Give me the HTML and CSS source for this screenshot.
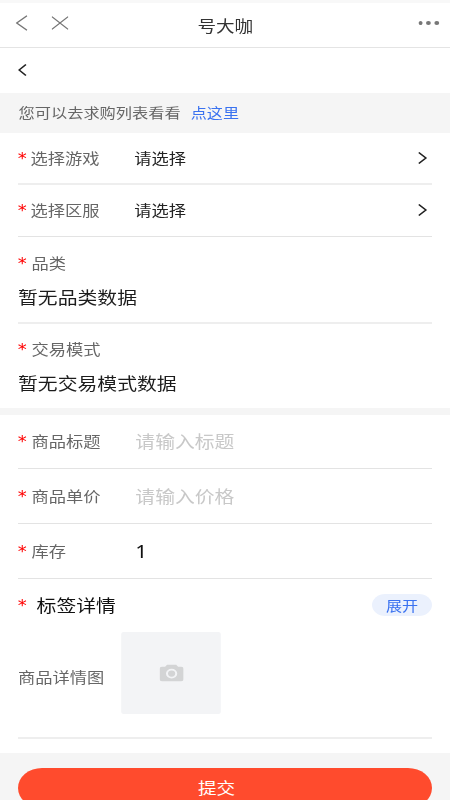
FILE: index.html
```html
<!DOCTYPE html>
<html lang="zh-CN">
<head>
<meta charset="utf-8">
<meta name="viewport" content="width=device-width, initial-scale=1">
<title>号大咖</title>
<link rel="stylesheet" href="styles.css">
</head>
<body>
<div class="screen">
  <div class="status"></div>
  <header class="nav">
    <div class="nav-left">
      <svg class="nav-back" width="10" height="16" viewBox="0 0 10 16"><path d="M9.5 0.7L0.9 8L9.5 15.3"/></svg>
      <svg class="nav-close" width="14" height="14" viewBox="0 0 14 14"><path d="M0.2 0.6L13.8 13.4M13.8 0.6L0.2 13.4"/></svg>
    </div>
    <h1 class="nav-title">号大咖</h1>
    <div class="dots"><i></i><i></i><i></i></div>
  </header>
  <div class="back-row">
    <svg width="8" height="12" viewBox="0 0 8 12"><path d="M6.6 0.5L0.9 6L6.6 11.5"/></svg>
  </div>
  <div class="notice"><span>您可以去求购列表看看</span><a>点这里</a></div>

  <section class="group">
    <div class="row select first">
      <b class="star">*</b><span class="label">选择游戏</span><span class="picked">请选择</span>
      <svg class="arrow" width="8" height="12" viewBox="0 0 8 12"><path d="M1 0.5L6.9 6L1 11.5"/></svg>
    </div>
    <div class="row select second">
      <b class="star">*</b><span class="label">选择区服</span><span class="picked">请选择</span>
      <svg class="arrow" width="8" height="12" viewBox="0 0 8 12"><path d="M1 0.5L6.9 6L1 11.5"/></svg>
    </div>
    <div class="block lined">
      <div class="block-head"><b class="star">*</b><span class="label">品类</span></div>
      <div class="value">暂无品类数据</div>
    </div>
    <div class="block">
      <div class="block-head"><b class="star">*</b><span class="label">交易模式</span></div>
      <div class="value">暂无交易模式数据</div>
    </div>
  </section>
  <div class="divider"></div>
  <section class="group">
    <div class="row field title-field"><b class="star">*</b><span class="label">商品标题</span><span class="hint">请输入标题</span></div>
    <div class="row field"><b class="star">*</b><span class="label">商品单价</span><span class="hint">请输入价格</span></div>
    <div class="row field"><b class="star">*</b><span class="label">库存</span><span class="amount">1</span></div>
    <div class="tags"><b class="star">*</b><span class="tags-title">标签详情</span><span class="pill">展开</span></div>
    <div class="upload">
      <span class="upload-label">商品详情图</span>
      <div class="photo">
        <svg width="20" height="18" viewBox="0 0 20 18"><path fill="#d3d4d5" fill-rule="evenodd" d="M6.2 0.8H13.8L15.4 2.8H18Q20 2.8 20 4.8V15.2Q20 17.2 18 17.2H2Q0 17.2 0 15.2V4.8Q0 2.8 2 2.8H4.6ZM10 4.7A4.7 4.9 0 1 0 10 14.5A4.7 4.9 0 1 0 10 4.7ZM10 6.5A3 3.1 0 1 1 10 12.7A3 3.1 0 1 1 10 6.5Z"/></svg>
      </div>
    </div>
  </section>
  <footer class="footer"><div class="submit">提交</div></footer>
</div>
</body>
</html>
```

FILE: styles.css
```css
* { box-sizing: border-box; }
html, body { margin: 0; height: 800px; overflow: hidden; background: #fff; }

.screen {
  width: 375px;
  height: 800px;
  overflow: hidden;
  display: flex;
  flex-direction: column;
  transform: scaleX(1.2);
  transform-origin: 0 0;
  font-family: "Noto Sans CJK SC", sans-serif;
  font-size: 14.4px;
  line-height: 20px;
  color: #666;
  white-space: nowrap;
}
.screen > * { flex-shrink: 0; }
svg { display: block; fill: none; stroke-width: 1.2; }

.status { height: 3px; background: #f8f8f8; }
.nav {
  height: 45px;
  border-bottom: 1px solid #e4e4e4;
  display: grid;
  grid-template-columns: 1fr auto 1fr;
  align-items: center;
  padding: 0 9px 0 12.5px;
}
.nav-left { display: flex; align-items: center; gap: 20px; padding-bottom: 4px; }
.nav-left svg { stroke: #777; }
.nav-title { margin: 0; font-size: 15.5px; font-weight: 400; color: #333; justify-self: center; position: relative; left: -1.5px; }
.dots { display: flex; gap: 3px; justify-self: end; padding-bottom: 4px; }
.dots i { width: 3.8px; height: 4px; border-radius: 50%; background: #777; }

.back-row { height: 45px; padding: 0 15px; display: flex; align-items: center; }
.back-row svg { stroke: #222; stroke-width: 1.4; margin-bottom: 2px; }
.notice {
  height: 40px;
  padding: 0 15.5px 2px;
  background: #f5f5f5;
  display: flex;
  align-items: center;
  gap: 8.5px;
  font-size: 13.5px;
}
.notice a { color: #3a72f0; font-size: 13.4px; }

.group { padding: 0 15px; }
.star { width: 11.3px; height: 20px; color: #f00; font: 400 15px/23px "DejaVu Sans", sans-serif; text-indent: -0.3px; }
.row { display: flex; align-items: center; padding-bottom: 1px; }
.row .label { width: 86.5px; }
.select .star { width: 10.4px; }
.first { height: 52px; border-bottom: 2px solid #eee; padding-bottom: 1px; }
.second { height: 52px; border-bottom: 1px solid #e3e3e3; padding-bottom: 2px; }
.picked { flex: 1; color: #222; }
.arrow { stroke: #222; stroke-width: 1.4; margin-right: 4px; }
.block { height: 84px; padding-top: 15px; }
.block.lined { height: 87px; padding-top: 16px; border-bottom: 2px solid #eee; }
.block-head { display: flex; height: 20px; }
.value { margin-top: 13.5px; font-size: 16.55px; color: #1c1c1c; }
.divider { height: 7px; background: #f5f5f5; }

.field { height: 55px; border-bottom: 1px solid #e3e3e3; }
.title-field { height: 54px; padding-bottom: 2px; }
.hint, .amount { font-size: 16.5px; color: #c8c8c8; }
.amount { color: #111; font-family: "Noto Sans", sans-serif; font-size: 17.5px; }
.tags { height: 53px; display: flex; align-items: center; padding-bottom: 1px; }
.tags .star { width: 15.5px; }
.tags-title { flex: 1; font-size: 16.5px; color: #111; }
.pill { width: 50px; height: 22px; border-radius: 11px; background: #ebf1fd; color: #3a72f0; font-size: 13.4px; line-height: 22px; text-align: center; }
.upload { height: 107px; border-bottom: 2px solid #eee; display: flex; }
.upload-label { width: 86px; padding-top: 35px; }
.photo { width: 83px; height: 82px; border-radius: 2px; background: #f3f4f6; display: grid; place-items: center; }

.footer { margin-top: 14px; height: 60px; background: #f5f5f5; padding: 15px 15px 0; }
.submit { height: 40px; border-radius: 20px; background: #ff4b2d; color: #fff; font-size: 15.5px; line-height: 38px; text-align: center; padding-right: 14px; }
```
